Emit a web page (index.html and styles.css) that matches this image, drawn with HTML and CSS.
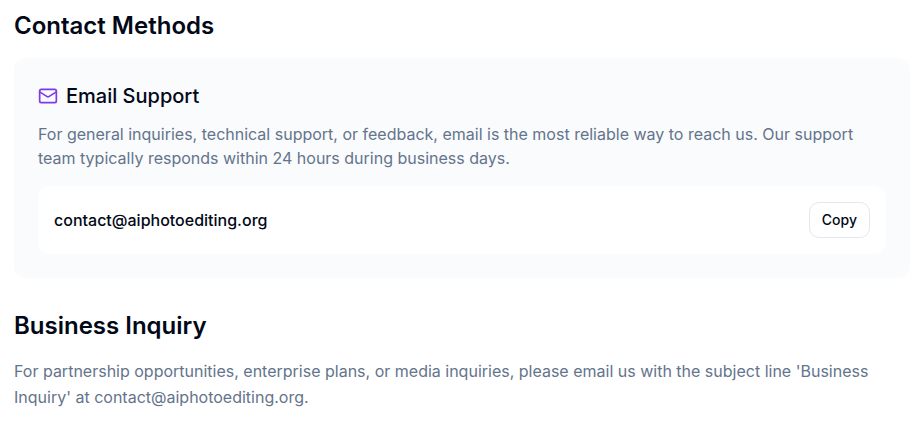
FILE: index.html
```html
<!DOCTYPE html>
<html lang="en">
<head>
<meta charset="utf-8">
<title>Contact Methods</title>
<link rel="stylesheet" href="styles.css">
</head>
<body>
<main class="page">
  <section>
    <h2 class="heading">Contact Methods</h2>
    <div class="card">
      <div class="card-title">
        <svg class="icon" viewBox="0 0 24 24" aria-hidden="true"><rect width="20" height="16" x="2" y="4" rx="2"/><path d="m22 7-8.97 5.7a1.94 1.94 0 0 1-2.06 0L2 7"/></svg>
        <h3>Email Support</h3>
      </div>
      <p class="card-text">For general inquiries, technical support, or feedback, email is the most reliable way to reach us. Our support team typically responds within 24 hours during business days.</p>
      <div class="email-row">
        <span class="email">contact@aiphotoediting.org</span>
        <button class="copy" type="button">Copy</button>
      </div>
    </div>
  </section>
  <section class="business">
    <h2 class="heading">Business Inquiry</h2>
    <p class="text">For partnership opportunities, enterprise plans, or media inquiries, please email us with the subject line 'Business Inquiry' at contact@aiphotoediting.org.</p>
  </section>
</main>
</body>
</html>
```
FILE: styles.css
```css
* { box-sizing: border-box; margin: 0; }
body {
  background: #fff;
  color: #020817;
  font-family: Inter, sans-serif;
  font-size: 16px;
  line-height: 24px;
}
.page { padding: 10px 1px 0 14px; }
.heading {
  font-size: 24px;
  line-height: 32px;
  font-weight: 600;
  margin-bottom: 16px;
}
.card {
  background: #fafbfd;
  border-radius: 12px;
  padding: 24px;
  height: 220px;
}
.card-title {
  display: flex;
  align-items: center;
  gap: 8px;
  height: 28px;
  margin-bottom: 12px;
}
.card-title h3 { font-size: 20px; line-height: 28px; font-weight: 500; }
.icon {
  width: 20px;
  height: 20px;
  fill: none;
  stroke: #7c3aed;
  stroke-width: 2;
  stroke-linecap: round;
  stroke-linejoin: round;
}
.card-text { color: #64748b; margin-bottom: 16px; }
.email-row {
  display: flex;
  align-items: center;
  justify-content: space-between;
  height: 68px;
  padding: 16px;
  background: #fff;
  border-radius: 12px;
}
.email { font-weight: 500; }
.copy {
  height: 36px;
  padding: 0 12px;
  border: 1px solid #e2e8f0;
  border-radius: 10px;
  background: #fff;
  color: inherit;
  font: 500 14px/20px Inter, sans-serif;
}
.business { margin-top: 32px; }
.text { color: #64748b; line-height: 26px; }
```
